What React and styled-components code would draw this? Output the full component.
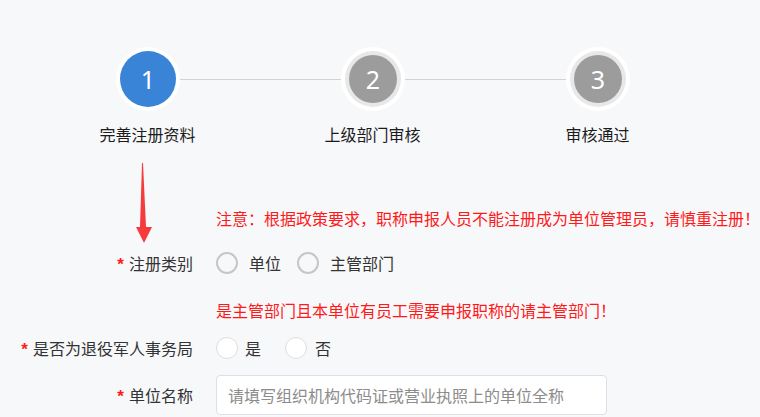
import { Fragment } from 'react'
import styled, { createGlobalStyle } from 'styled-components'

const GlobalStyle = createGlobalStyle`
  html, body {
    margin: 0;
    padding: 0;
    background: #f7f8fa;
  }
  body {
    font-family: "Noto Sans CJK SC", "Noto Sans", sans-serif;
    color: #333;
  }
`

// styles
const Page = styled.div`
  position: relative;
  width: 760px;
  height: 417px;
  overflow: hidden;
  padding-top: 47px;
  box-sizing: border-box;
`

const Steps = styled.div`
  display: flex;
  align-items: center;
  margin-left: 116px;
`

const Circle = styled.div`
  width: 64px;
  height: 64px;
  box-sizing: border-box;
  border-radius: 50%;
  background: #fff;
  display: flex;
  align-items: center;
  justify-content: center;
  flex-shrink: 0;
`

const Inner = styled.div`
  width: ${({ $active }) => ($active ? '56px' : '48px')};
  height: ${({ $active }) => ($active ? '56px' : '48px')};
  border-radius: 50%;
  background: ${({ $active }) => ($active ? '#3a84d8' : '#9c9c9c')};
  box-shadow: ${({ $active }) => ($active ? 'none' : '0 0 0 4px #e8e8e8')};
  color: #fff;
  font-family: "Noto Sans", sans-serif;
  font-size: 25px;
  display: flex;
  align-items: center;
  justify-content: center;
`

const Line = styled.div`
  width: 161px;
  height: 1px;
  background: #d3d3d6;
`

const Labels = styled.div`
  display: flex;
  margin-left: 35px;
  margin-top: 12px;
`

const StepLabel = styled.div`
  width: 225px;
  text-align: center;
  font-size: 16px;
  line-height: 22px;
  color: #1c1c1c;
`

const Form = styled.div`
  margin-top: 61px;
`

const Notice = styled.div`
  padding-left: 216px;
  font-size: 16px;
  line-height: 24px;
  color: #ff1a1a;
  margin-top: ${({ $top }) => $top || 0}px;
  white-space: nowrap;
`

const Row = styled.div`
  display: flex;
  align-items: center;
  height: 40px;
  margin-top: ${({ $top }) => $top || 0}px;
`

const Label = styled.div`
  width: 193px;
  text-align: right;
  font-size: 16px;
  color: #333;
  margin-right: 23px;
  flex-shrink: 0;
`

const Star = styled.span`
  color: #ff1a1a;
  font-family: "Liberation Sans", sans-serif;
  font-weight: bold;
  font-size: 17px;
  margin-right: 5px;
`

const Option = styled.label`
  display: flex;
  align-items: center;
  font-size: 16px;
  color: #333;
  margin-right: ${({ $after }) => $after}px;
`

const Radio = styled.span`
  width: 22px;
  height: 22px;
  box-sizing: border-box;
  border-radius: 50%;
  border: ${({ $light }) => ($light ? '1px solid #dedede' : '2px solid #c6c6c6')};
  background: ${({ $light }) => ($light ? '#fff' : 'transparent')};
  margin-right: ${({ $gap }) => $gap}px;
`

const Input = styled.input`
  width: 391px;
  height: 40px;
  box-sizing: border-box;
  border: 1px solid #dcdfe6;
  border-radius: 4px;
  background: #fff;
  padding: 0 11px;
  font-family: "Noto Sans CJK SC", "Noto Sans", sans-serif;
  font-size: 16px;
  outline: none;

  &::placeholder {
    color: #8c8c8c;
  }
`

const Arrow = styled.svg`
  position: absolute;
  left: 136px;
  top: 163px;
`

const steps = ['完善注册资料', '上级部门审核', '审核通过']

const App = () => {
  return (
    <Page>
      <GlobalStyle />
      <Steps>
        {steps.map((s, i) => (
          <Fragment key={s}>
            <Circle>
              <Inner $active={i === 0}>{i + 1}</Inner>
            </Circle>
            {i < steps.length - 1 && <Line />}
          </Fragment>
        ))}
      </Steps>
      <Labels>
        {steps.map(s => <StepLabel key={s}>{s}</StepLabel>)}
      </Labels>

      <Arrow width="16" height="81" viewBox="0 0 16 81">
        <polygon points="6,0 7,0 10,64 16,64 8,80 0,64 4,64" fill="#f53b3b" />
      </Arrow>

      <Form>
        <Notice>注意：根据政策要求，职称申报人员不能注册成为单位管理员，请慎重注册！</Notice>
        <Row $top={13}>
          <Label><Star>*</Star>注册类别</Label>
          <Option $after={16}><Radio $gap={11} />单位</Option>
          <Option $after={0}><Radio $gap={11} />主管部门</Option>
        </Row>
        <Notice $top={15}>是主管部门且本单位有员工需要申报职称的请主管部门！</Notice>
        <Row $top={6}>
          <Label><Star>*</Star>是否为退役军人事务局</Label>
          <Option $after={24}><Radio $light $gap={7} />是</Option>
          <Option $after={0}><Radio $light $gap={8} />否</Option>
        </Row>
        <Row $top={7}>
          <Label><Star>*</Star>单位名称</Label>
          <Input type="text" placeholder="请填写组织机构代码证或营业执照上的单位全称" />
        </Row>
      </Form>
    </Page>
  )
}

export default App
